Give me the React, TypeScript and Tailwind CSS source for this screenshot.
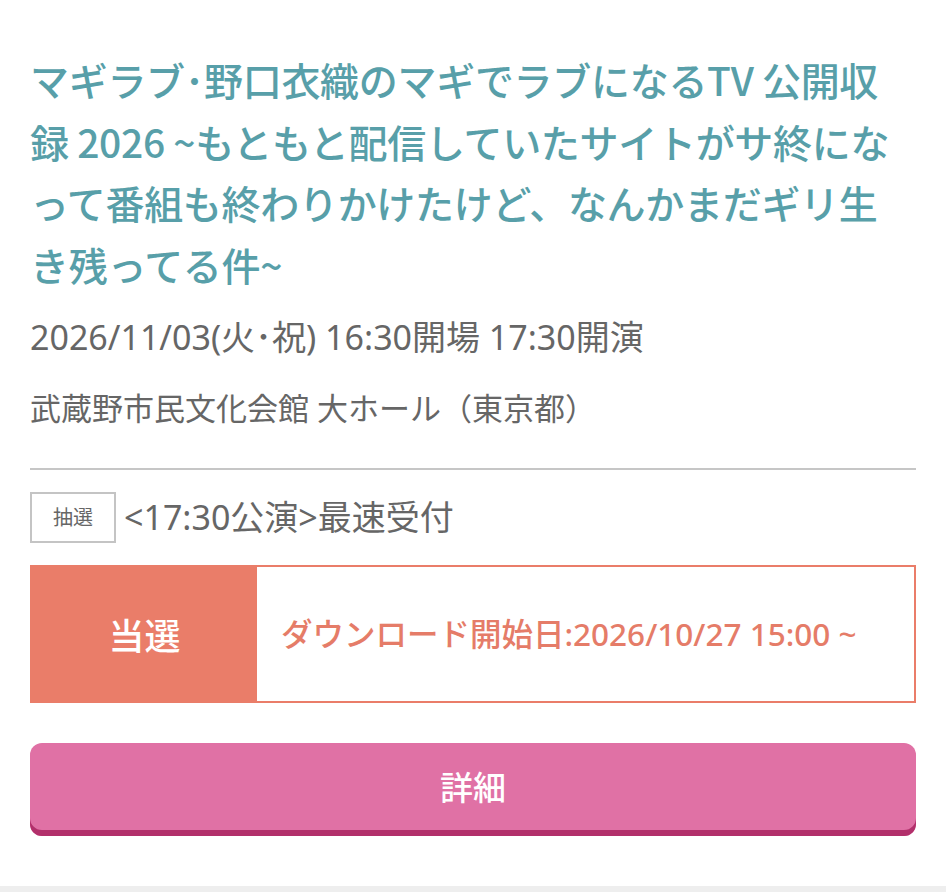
export default function App() {
  const cjk = { fontFamily: '"Noto Sans CJK JP", "Noto Sans", sans-serif' };
  const mixed = { fontFamily: '"Noto Sans", "Noto Sans CJK JP", sans-serif' };
  return (
    <div className="w-full min-h-[892px] bg-[#eeeeee]" style={cjk}>
      <div className="bg-white px-[30px] pt-[49px] pb-[50px]">
        <h1 className="text-[39px] leading-[61.5px] font-medium text-[#589fa9] tracking-[-0.3px]">
          マギラブ･野口衣織のマギでラブになるTV 公開収録 2026 ~もともと配信していたサイトがサ終になって番組も終わりかけたけど、なんかまだギリ生き残ってる件~
        </h1>
        <p className="mt-[20px] text-[34px] leading-[45px] text-[#666666]" style={mixed}>
          2026/11/03(火･祝) 16:30開場 17:30開演
        </p>
        <p className="mt-[26px] text-[31px] leading-[45px] text-[#666666]" style={mixed}>
          武蔵野市民文化会館 大ホール（東京都）
        </p>
        <div className="mt-[37px] h-[2px] bg-[#c6c6c6]" />
        <div className="mt-[22px] flex items-center gap-[8px]" style={mixed}>
          <span className="flex h-[51px] w-[86px] items-center justify-center border-2 border-[#c4c4c4] text-[20px] text-[#666666]">
            抽選
          </span>
          <span className="text-[34px] leading-[45px] text-[#666666]">&lt;17:30公演&gt;最速受付</span>
        </div>
        <div className="mt-[22px] flex h-[138px] border-2 border-[#ea7d69]">
          <div className="flex w-[225px] items-center justify-center bg-[#ea7d69] text-[36px] font-medium text-white">
            当選
          </div>
          <div className="flex flex-1 items-center pl-[24px] text-[31.5px] font-medium text-[#e57c68]" style={mixed}>
            ダウンロード開始日:2026/10/27 15:00 ~
          </div>
        </div>
        <button className="mt-[40px] flex h-[93px] w-full items-center justify-center rounded-[12px] bg-[#e071a5] pb-[6px] text-[33px] font-medium text-white shadow-[inset_0_-6px_0_#b2306b]">
          詳細
        </button>
      </div>
    </div>
  );
}
